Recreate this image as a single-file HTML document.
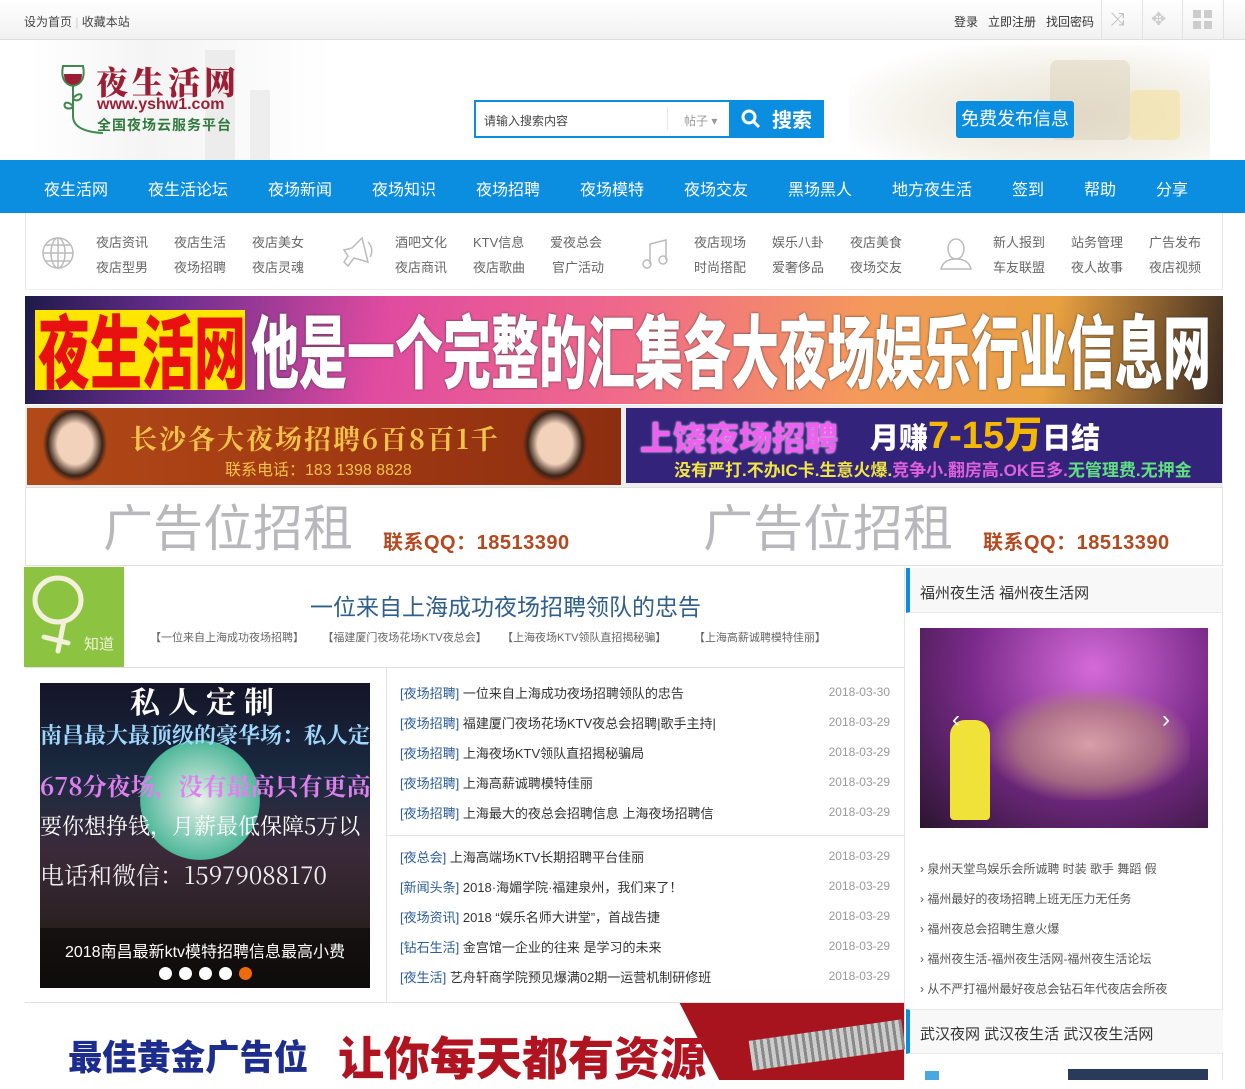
<!DOCTYPE html>
<html><head><meta charset="utf-8"><style>
*{margin:0;padding:0;box-sizing:border-box}
body{width:1245px;height:1080px;overflow:hidden;background:#fff;font-family:"Liberation Sans","Noto Sans CJK SC",sans-serif;color:#333;position:relative;font-size:12px}
.a{position:absolute}
.top{left:0;top:0;width:1245px;height:40px;background:linear-gradient(#fff,#f1f1f1);border-bottom:1px solid #ddd}
.nav{left:0;top:160px;width:1245px;height:53px;background:#0b8ee0}
.nav span{position:absolute;top:16px;color:#fff;font-size:16px}
.sub span{position:absolute;color:#666;font-size:13px}
.list div{position:absolute;left:400px;width:490px;font-size:13px;color:#333;height:20px}
.list b{font-weight:normal;color:#2c5d9a}
.list i{font-style:normal;position:absolute;right:0;top:2px;color:#999;font-size:12px}
.rl div{position:absolute;left:920px;font-size:12px;color:#555}
.dot{position:absolute;top:967px;width:13px;height:13px;border-radius:50%;background:#fff}
</style></head><body>
<div class="a top"></div>
<div class="a" style="left:24px;top:13px;font-size:12px;color:#444">设为首页 <span style="color:#ccc">|</span> 收藏本站</div>
<div class="a" style="left:954px;top:13px;font-size:12px;color:#333">登录&nbsp;&nbsp; 立即注册&nbsp;&nbsp; 找回密码</div>
<div class="a" style="left:1101px;top:0;width:1px;height:40px;background:#e2e2e2"></div>
<div class="a" style="left:1142px;top:0;width:1px;height:40px;background:#e2e2e2"></div>
<div class="a" style="left:1182px;top:0;width:1px;height:40px;background:#e2e2e2"></div>
<div class="a" style="left:1223px;top:0;width:1px;height:40px;background:#e2e2e2"></div>
<div class="a" style="left:1110px;top:9px;color:#bbb;font-size:18px">⤨</div>
<div class="a" style="left:1151px;top:9px;color:#ccc;font-size:18px">✥</div>
<svg class="a" style="left:1193px;top:10px" width="20" height="20"><rect x="0" y="0" width="8" height="8" fill="#ccc"/><rect x="11" y="0" width="8" height="8" fill="#ccc"/><rect x="0" y="11" width="8" height="8" fill="#ccc"/><rect x="11" y="11" width="8" height="8" fill="#ccc"/></svg>

<!-- header -->
<div class="a" style="left:30px;top:40px;width:300px;height:120px;background:linear-gradient(90deg,#fff,#f3f3f3 40%,#fff);opacity:.9"></div>
<div class="a" style="left:205px;top:50px;width:30px;height:110px;background:#ececec"></div>
<div class="a" style="left:250px;top:90px;width:20px;height:70px;background:#eee"></div>
<svg class="a" style="left:55px;top:60px" width="50" height="80"><path d="M8 6h20c2 10 0 18-10 20-10-2-12-10-10-20z" fill="#fff" stroke="#3d8a4a" stroke-width="2"/><path d="M9 14h18c0 8-4 10-9 11-6-1-9-4-9-11z" fill="#9b1e35"/><path d="M18 26v30c0 10 10 16 30 17" fill="none" stroke="#3d8a4a" stroke-width="2"/><path d="M18 38c6-6 10-4 8 0-3 4-8 2-8 0zM18 46c-6-6-10-3-8 1 3 3 8 1 8-1z" fill="none" stroke="#3d8a4a" stroke-width="2"/></svg>
<div class="a" style="left:96px;top:58px;font-family:'Noto Serif CJK SC',serif;font-weight:900;font-size:32px;color:#9b1e35;letter-spacing:4px">夜生活网</div>
<div class="a" style="left:97px;top:96px;font-size:16px;color:#9b1e35;font-weight:bold">www.yshw1.com</div>
<div class="a" style="left:97px;top:115px;font-size:14px;color:#2f7a3c;font-weight:bold;letter-spacing:1px">全国夜场云服务平台</div>

<div class="a" style="left:474px;top:100px;width:257px;height:38px;border:2px solid #0b8ee0;background:#fff"></div>
<div class="a" style="left:484px;top:112px;font-size:12px;color:#444">请输入搜索内容</div>
<div class="a" style="left:667px;top:108px;width:1px;height:22px;background:#e5e5e5"></div>
<div class="a" style="left:684px;top:112px;font-size:12px;color:#999">帖子 ▾</div>
<div class="a" style="left:730px;top:100px;width:94px;height:38px;background:#0b8ee0"></div>
<svg class="a" style="left:741px;top:109px" width="20" height="20"><circle cx="8" cy="8" r="6" fill="none" stroke="#fff" stroke-width="3"/><path d="M12 12l6 6" stroke="#fff" stroke-width="3"/></svg>
<div class="a" style="left:772px;top:104px;font-size:20px;color:#fff;font-weight:bold">搜索</div>
<div class="a" style="left:850px;top:45px;width:360px;height:115px;background:radial-gradient(ellipse at 60% 60%,#e8e2d4,#f5f2ea 50%,#fff 80%)"></div>
<div class="a" style="left:1050px;top:60px;width:80px;height:80px;background:#d8cbb0;opacity:.4;border-radius:8px"></div>
<div class="a" style="left:1130px;top:90px;width:50px;height:50px;background:#f2e3a8;opacity:.7;border-radius:6px"></div>
<div class="a" style="left:956px;top:101px;width:118px;height:37px;background:#0b8ee0;border-radius:3px;color:#fff;font-size:18px;text-align:center;line-height:37px">免费发布信息</div>

<div class="a nav">
<span style="left:44px">夜生活网</span><span style="left:148px">夜生活论坛</span><span style="left:268px">夜场新闻</span><span style="left:372px">夜场知识</span><span style="left:476px">夜场招聘</span><span style="left:580px">夜场模特</span><span style="left:684px">夜场交友</span><span style="left:788px">黑场黑人</span><span style="left:892px">地方夜生活</span><span style="left:1012px">签到</span><span style="left:1084px">帮助</span><span style="left:1156px">分享</span>
</div>

<!-- subnav -->
<div class="a" style="left:25px;top:213px;width:1px;height:77px;background:#e5e5e5"></div>
<div class="a" style="left:1222px;top:213px;width:1px;height:77px;background:#e5e5e5"></div>
<div class="a" style="left:25px;top:289px;width:1198px;height:1px;background:#eee"></div>
<svg class="a" style="left:40px;top:235px" width="36" height="36" fill="none" stroke="#bbb" stroke-width="1.5"><circle cx="18" cy="18" r="15"/><ellipse cx="18" cy="18" rx="7" ry="15"/><path d="M3 18h30M6 10h24M6 26h24M18 3v30"/></svg>
<svg class="a" style="left:340px;top:236px" width="36" height="34" fill="none" stroke="#bbb" stroke-width="1.5"><path d="M4 14l8-2 10-10 6 24-14-4-6 8-4-4 4-6z"/><path d="M28 6c4 4 5 10 2 15"/></svg>
<svg class="a" style="left:640px;top:236px" width="36" height="36" fill="none" stroke="#bbb" stroke-width="1.5"><path d="M10 28V8l16-4v20"/><circle cx="7" cy="28" r="4"/><circle cx="23" cy="24" r="4"/></svg>
<svg class="a" style="left:938px;top:236px" width="36" height="36" fill="none" stroke="#bbb" stroke-width="1.5"><ellipse cx="18" cy="13" rx="8" ry="10"/><path d="M3 33c2-8 8-10 15-10s13 2 15 10z"/></svg>
<div class="sub">
<span style="left:96px;top:232px">夜店资讯</span><span style="left:174px;top:232px">夜店生活</span><span style="left:252px;top:232px">夜店美女</span>
<span style="left:96px;top:257px">夜店型男</span><span style="left:174px;top:257px">夜场招聘</span><span style="left:252px;top:257px">夜店灵魂</span>
<span style="left:395px;top:232px">酒吧文化</span><span style="left:473px;top:232px">KTV信息</span><span style="left:550px;top:232px">爱夜总会</span>
<span style="left:395px;top:257px">夜店商讯</span><span style="left:473px;top:257px">夜店歌曲</span><span style="left:552px;top:257px">官广活动</span>
<span style="left:694px;top:232px">夜店现场</span><span style="left:772px;top:232px">娱乐八卦</span><span style="left:850px;top:232px">夜店美食</span>
<span style="left:694px;top:257px">时尚搭配</span><span style="left:772px;top:257px">爱奢侈品</span><span style="left:850px;top:257px">夜场交友</span>
<span style="left:993px;top:232px">新人报到</span><span style="left:1071px;top:232px">站务管理</span><span style="left:1149px;top:232px">广告发布</span>
<span style="left:993px;top:257px">车友联盟</span><span style="left:1071px;top:257px">夜人故事</span><span style="left:1149px;top:257px">夜店视频</span>
</div>

<!-- banner 1 -->
<div class="a" style="left:25px;top:296px;width:1198px;height:108px;overflow:hidden;background:linear-gradient(100deg,#1d1a4a 0%,#6a2d8e 12%,#e04ba0 30%,#f06a8a 50%,#f49a5a 70%,#e8a040 85%,#3a2a20 100%)">
<div class="a" style="left:10px;top:14px;width:210px;height:80px;background:#ffe600"></div>
<div class="a" style="left:13px;top:4px;font-size:80px;font-weight:900;color:#e81010;line-height:96px;font-family:'Noto Sans CJK SC',sans-serif;white-space:nowrap;transform:scaleX(0.65);transform-origin:0 0">夜生活网</div>
<div class="a" style="left:226px;top:4px;font-size:80px;font-weight:900;color:#fff;line-height:96px;font-family:'Noto Sans CJK SC',sans-serif;white-space:nowrap;text-shadow:0 0 3px #333;transform:scaleX(0.600);transform-origin:0 0">他是一个完整的汇集各大夜场娱乐行业信息网</div>
</div>

<!-- banner 2 -->
<div class="a" style="left:25px;top:405px;width:1198px;height:82px;background:#eee"></div>
<div class="a" style="left:27px;top:408px;width:594px;height:77px;background:linear-gradient(90deg,#b14a18,#a23a12 50%,#8d2e10)"></div>
<div class="a" style="left:40px;top:410px;width:70px;height:75px;background:radial-gradient(ellipse at 50% 45%,#f3d2bc 35%,#3a2418 55%,transparent 65%)"></div>
<div class="a" style="left:520px;top:410px;width:70px;height:75px;background:radial-gradient(ellipse at 50% 45%,#f3d2bc 35%,#3a2418 55%,transparent 65%)"></div>
<div class="a" style="left:130px;top:418px;font-size:27px;color:#f3c24a;font-family:'Noto Serif CJK SC',serif;font-weight:bold;letter-spacing:2px">长沙各大夜场招聘6百8百1千</div>
<div class="a" style="left:225px;top:456px;font-size:16px;color:#f3c24a">联系电话：183 1398 8828</div>
<div class="a" style="left:626px;top:408px;width:596px;height:75px;background:#34237a"></div>
<div class="a" style="left:640px;top:412px;font-size:33px;font-weight:900;color:#f060f0;text-shadow:0 0 2px #fff">上饶夜场招聘</div>
<div class="a" style="left:870px;top:415px;font-size:29px;font-weight:900;color:#fff">月赚<span style="color:#f5b800;font-size:38px;line-height:30px">7-15万</span>日结</div>
<div class="a" style="left:674px;top:456px;font-size:17px;font-weight:bold;color:#f0e640;white-space:nowrap">没有严打.不办IC卡.生意火爆.<span style="color:#e060e0">竞争小.翻房高.OK巨多.</span><span style="color:#60e080">无管理费.无押金</span></div>

<!-- ads -->
<div class="a" style="left:25px;top:487px;width:1198px;height:79px;border:1px solid #e0e0e0;background:#fff"></div>
<div class="a" style="left:103px;top:499px;font-size:50px;color:#b8b8bc;line-height:60px">广告位招租</div>
<div class="a" style="left:383px;top:526px;font-size:20px;color:#b5481e;font-weight:bold;letter-spacing:.5px">联系QQ：18513390</div>
<div class="a" style="left:703px;top:499px;font-size:50px;color:#b8b8bc;line-height:60px">广告位招租</div>
<div class="a" style="left:983px;top:526px;font-size:20px;color:#b5481e;font-weight:bold;letter-spacing:.5px">联系QQ：18513390</div>

<!-- main left -->
<div class="a" style="left:25px;top:567px;width:880px;height:513px;border-right:1px solid #e5e5e5"></div>
<div class="a" style="left:24px;top:567px;width:100px;height:100px;background:#8cc341"></div>
<svg class="a" style="left:24px;top:567px" width="100" height="100" fill="none" stroke="#f3f1dc" stroke-width="5" stroke-linecap="round"><ellipse cx="34" cy="33" rx="23" ry="22"/><path d="M40 54l-6 30M20 70l24 6"/><text x="60" y="82" font-size="15" fill="#f3f1dc" stroke="none" font-family="Noto Sans CJK SC">知道</text></svg>
<div class="a" style="left:310px;top:588px;font-size:23px;color:#2f5f8c">一位来自上海成功夜场招聘领队的忠告</div>
<div class="a" style="left:150px;top:629px;font-size:11px;color:#666;white-space:nowrap">【一位来自上海成功夜场招聘】&nbsp;&nbsp;&nbsp;&nbsp;&nbsp;&nbsp;【福建厦门夜场花场KTV夜总会】&nbsp;&nbsp;&nbsp;&nbsp;&nbsp;【上海夜场KTV领队直招揭秘骗】&nbsp;&nbsp;&nbsp;&nbsp;&nbsp;&nbsp;&nbsp;&nbsp;&nbsp;【上海高薪诚聘模特佳丽】</div>
<div class="a" style="left:25px;top:667px;width:880px;height:1px;background:#e0e0e0"></div>

<div class="a" style="left:40px;top:683px;width:330px;height:305px;background:linear-gradient(#141428 0%,#1a2a40 30%,#3b2a3a 55%,#2a2020 80%,#1a1515 100%)"></div>
<div class="a" style="left:140px;top:740px;width:120px;height:120px;border-radius:50%;background:radial-gradient(#e8f0e8,#4fb89a 70%,transparent 72%)"></div>
<div class="a" style="left:130px;top:678px;font-size:30px;color:#fff;font-family:'Noto Serif CJK SC',serif;font-weight:bold;letter-spacing:8px">私人定制</div>
<div class="a" style="left:40px;top:719px;font-size:22px;color:#9fd8ff;white-space:nowrap;overflow:hidden;width:330px;font-family:'Noto Serif CJK SC',serif;font-weight:bold">南昌最大最顶级的豪华场：私人定制</div>
<div class="a" style="left:40px;top:767px;font-size:24px;color:#e080f0;white-space:nowrap;overflow:hidden;width:330px;font-family:'Noto Serif CJK SC',serif;font-weight:bold">678分夜场，没有最高只有更高</div>
<div class="a" style="left:40px;top:810px;font-size:22px;color:#fff;white-space:nowrap;overflow:hidden;width:330px;font-family:'Noto Serif CJK SC',serif">要你想挣钱，月薪最低保障5万以</div>
<div class="a" style="left:40px;top:856px;font-size:24px;color:#eee;white-space:nowrap;overflow:hidden;width:330px;font-family:'Noto Serif CJK SC',serif">电话和微信：15979088170</div>
<div class="a" style="left:40px;top:928px;width:330px;height:60px;background:rgba(0,0,0,.45)"></div>
<div class="a" style="left:40px;top:938px;width:330px;text-align:center;font-size:16px;color:#fff">2018南昌最新ktv模特招聘信息最高小费</div>
<div class="dot" style="left:159px"></div><div class="dot" style="left:179px"></div><div class="dot" style="left:199px"></div><div class="dot" style="left:219px"></div><div class="dot" style="left:239px;background:#f06a0a"></div>

<div class="a" style="left:386px;top:668px;width:1px;height:335px;background:#e5e5e5"></div>
<div class="list">
<div style="top:683px"><b>[夜场招聘]</b> 一位来自上海成功夜场招聘领队的忠告<i>2018-03-30</i></div>
<div style="top:713px"><b>[夜场招聘]</b> 福建厦门夜场花场KTV夜总会招聘|歌手主持|<i>2018-03-29</i></div>
<div style="top:743px"><b>[夜场招聘]</b> 上海夜场KTV领队直招揭秘骗局<i>2018-03-29</i></div>
<div style="top:773px"><b>[夜场招聘]</b> 上海高薪诚聘模特佳丽<i>2018-03-29</i></div>
<div style="top:803px"><b>[夜场招聘]</b> 上海最大的夜总会招聘信息 上海夜场招聘信<i>2018-03-29</i></div>
<div style="top:847px"><b>[夜总会]</b> 上海高端场KTV长期招聘平台佳丽<i>2018-03-29</i></div>
<div style="top:877px"><b>[新闻头条]</b> 2018·海媚学院·福建泉州，我们来了！<i>2018-03-29</i></div>
<div style="top:907px"><b>[夜场资讯]</b> 2018 “娱乐名师大讲堂”，首战告捷<i>2018-03-29</i></div>
<div style="top:937px"><b>[钻石生活]</b> 金宫馆一企业的往来 是学习的未来<i>2018-03-29</i></div>
<div style="top:967px"><b>[夜生活]</b> 艺舟轩商学院预见爆满02期一运营机制研修班<i>2018-03-29</i></div>
</div>
<div class="a" style="left:387px;top:835px;width:517px;height:1px;background:#e5e5e5"></div>
<div class="a" style="left:25px;top:1002px;width:880px;height:1px;background:#e0e0e0"></div>

<div class="a" style="left:640px;top:1003px;width:264px;height:77px;background:#a8141e;clip-path:polygon(15% 0,100% 0,100% 100%,30% 100%)"></div>
<div class="a" style="left:750px;top:1030px;width:154px;height:30px;background:repeating-linear-gradient(90deg,#ccc 0 4px,#888 4px 7px);transform:rotate(-8deg)"></div>
<div class="a" style="left:68px;top:1034px;font-size:35px;font-weight:900;color:#1c2d8e;font-family:'Noto Sans CJK SC',sans-serif;line-height:44px;white-space:nowrap;transform:scaleX(0.98);transform-origin:0 0">最佳黄金广告位</div>
<div class="a" style="left:338px;top:1030px;font-size:46px;font-weight:900;color:#b01420;font-family:'Noto Sans CJK SC',sans-serif;line-height:52px;white-space:nowrap">让你每天都有资源</div>

<!-- right -->
<div class="a" style="left:906px;top:568px;width:317px;height:45px;background:#f8f8f8;border-left:4px solid #0b8ee0;border-bottom:1px solid #eaeaea"></div>
<div class="a" style="left:920px;top:582px;font-size:15px;color:#333">福州夜生活 福州夜生活网</div>
<div class="a" style="left:1222px;top:568px;width:1px;height:512px;background:#e5e5e5"></div>
<div class="a" style="left:920px;top:628px;width:288px;height:200px;background:radial-gradient(ellipse at 60% 20%,#d46ad8,#7a2a8a 50%,#2a1530 100%)"></div>
<div class="a" style="left:950px;top:720px;width:40px;height:100px;background:#f1e23a;border-radius:15px 15px 4px 4px"></div>
<div class="a" style="left:990px;top:690px;width:200px;height:110px;background:radial-gradient(ellipse,#e8b8a8 0%,#b07a80 50%,transparent 75%);opacity:.8"></div>
<div class="a" style="left:952px;top:706px;font-size:24px;color:#fff">‹</div>
<div class="a" style="left:1162px;top:706px;font-size:24px;color:#fff">›</div>
<div class="rl">
<div style="top:860px">› 泉州天堂鸟娱乐会所诚聘 时装 歌手 舞蹈 假</div>
<div style="top:890px">› 福州最好的夜场招聘上班无压力无任务</div>
<div style="top:920px">› 福州夜总会招聘生意火爆</div>
<div style="top:950px">› 福州夜生活-福州夜生活网-福州夜生活论坛</div>
<div style="top:980px">› 从不严打福州最好夜总会钻石年代夜店会所夜</div>
</div>
<div class="a" style="left:906px;top:1009px;width:317px;height:45px;background:#f8f8f8;border-left:4px solid #0b8ee0;border-top:1px solid #eaeaea;border-bottom:1px solid #eaeaea"></div>
<div class="a" style="left:920px;top:1023px;font-size:15px;color:#333">武汉夜网 武汉夜生活 武汉夜生活网</div>
<div class="a" style="left:1068px;top:1069px;width:140px;height:11px;background:#2a3a5a"></div>
<div class="a" style="left:925px;top:1071px;width:14px;height:9px;background:#4aa8e0"></div>
</body></html>
